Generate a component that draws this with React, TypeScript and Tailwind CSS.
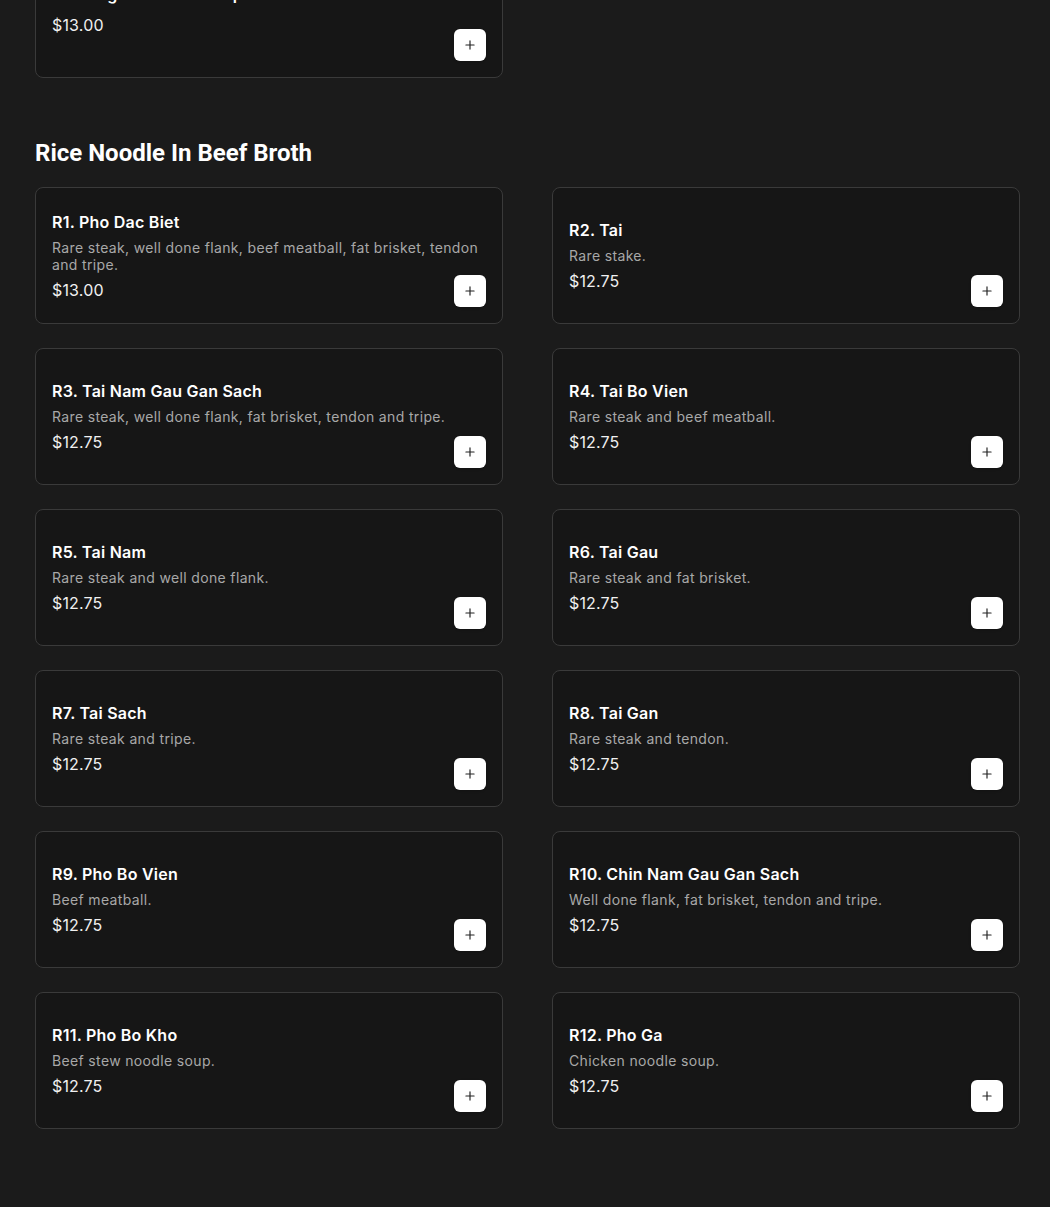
import { Plus } from "lucide-react";

type Item = {
    name: string;
    desc?: string;
    price: string;
};

const beefBroth: Item[] = [
    { name: "R1. Pho Dac Biet", desc: "Rare steak, well done flank, beef meatball, fat brisket, tendon and tripe.", price: "$13.00" },
    { name: "R2. Tai", desc: "Rare stake.", price: "$12.75" },
    { name: "R3. Tai Nam Gau Gan Sach", desc: "Rare steak, well done flank, fat brisket, tendon and tripe.", price: "$12.75" },
    { name: "R4. Tai Bo Vien", desc: "Rare steak and beef meatball.", price: "$12.75" },
    { name: "R5. Tai Nam", desc: "Rare steak and well done flank.", price: "$12.75" },
    { name: "R6. Tai Gau", desc: "Rare steak and fat brisket.", price: "$12.75" },
    { name: "R7. Tai Sach", desc: "Rare steak and tripe.", price: "$12.75" },
    { name: "R8. Tai Gan", desc: "Rare steak and tendon.", price: "$12.75" },
    { name: "R9. Pho Bo Vien", desc: "Beef meatball.", price: "$12.75" },
    { name: "R10. Chin Nam Gau Gan Sach", desc: "Well done flank, fat brisket, tendon and tripe.", price: "$12.75" },
    { name: "R11. Pho Bo Kho", desc: "Beef stew noodle soup.", price: "$12.75" },
    { name: "R12. Pho Ga", desc: "Chicken noodle soup.", price: "$12.75" },
];

function MenuCard({ item }: { item: Item }) {
    return (
        <div className="relative flex h-[137px] items-center rounded-lg border border-[#3a3a3a] bg-[#161616] px-4">
            <div className="w-full">
                <h3 className="text-base font-semibold leading-6 tracking-[0.015em] text-white">{item.name}</h3>
                {item.desc ? (
                    <p className="mt-[5px] text-sm leading-[17px] tracking-[0.025em] text-[#a8a8a8]">{item.desc}</p>
                ) : null}
                <p className={`${item.desc ? "mt-[5px]" : "mt-[7px]"} text-base leading-6 tracking-[0.01em] text-[#f0f0f0]`}>
                    {item.price}
                </p>
            </div>
            <button className="absolute bottom-4 right-4 flex h-8 w-8 items-center justify-center rounded-md bg-white text-[#222] shadow-sm">
                <Plus size={14} strokeWidth={2} />
            </button>
        </div>
    );
}

export default function App() {
    return (
        <div
            className="min-h-[1207px] overflow-hidden bg-[#1b1b1b] pl-[35px] pr-[30px]"
            style={{ fontFamily: "Inter, 'Open Sans', sans-serif" }}
        >
            <div className="-mt-[59px] grid grid-cols-2 gap-x-[49px]">
                <MenuCard item={{ name: "S4. Large Beef Rib Soup", price: "$13.00" }} />
            </div>

            <h2
                className="mt-[59px] text-2xl font-bold leading-8 text-white"
                style={{ fontFamily: "Roboto, sans-serif" }}
            >
                Rice Noodle In Beef Broth
            </h2>

            <div className="mt-[18px] grid grid-cols-2 gap-x-[49px] gap-y-6 pb-[79px]">
                {beefBroth.map(item => (
                    <MenuCard key={item.name} item={item} />
                ))}
            </div>
        </div>
    );
}
